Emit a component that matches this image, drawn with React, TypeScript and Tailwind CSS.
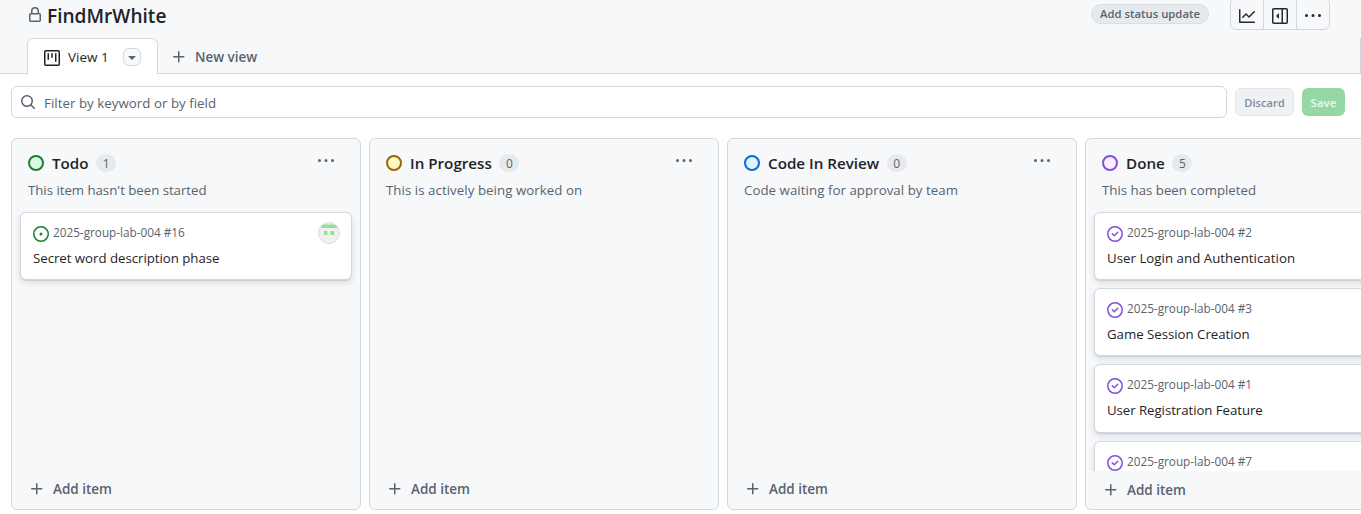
import type { ReactNode } from "react";

const icons = {
  lock: "M4 4a4 4 0 0 1 8 0v2h.25c.966 0 1.75.784 1.75 1.75v5.5A1.75 1.75 0 0 1 12.25 15h-8.5A1.75 1.75 0 0 1 2 13.25v-5.5C2 6.784 2.784 6 3.75 6H4Zm8.25 3.5h-8.5a.25.25 0 0 0-.25.25v5.5c0 .138.112.25.25.25h8.5a.25.25 0 0 0 .25-.25v-5.5a.25.25 0 0 0-.25-.25ZM10.5 6V4a2.5 2.5 0 1 0-5 0v2Z",
  project:
    "M1.75 0h12.5C15.216 0 16 .784 16 1.75v12.5A1.75 1.75 0 0 1 14.25 16H1.75A1.75 1.75 0 0 1 0 14.25V1.75C0 .784.784 0 1.75 0ZM1.5 1.75v12.5c0 .138.112.25.25.25h12.5a.25.25 0 0 0 .25-.25V1.75a.25.25 0 0 0-.25-.25H1.75a.25.25 0 0 0-.25.25ZM11.75 3a.75.75 0 0 1 .75.75v7.5a.75.75 0 0 1-1.5 0v-7.5a.75.75 0 0 1 .75-.75Zm-8.25.75a.75.75 0 0 1 1.5 0v5.5a.75.75 0 0 1-1.5 0ZM8 3a.75.75 0 0 1 .75.75v3.5a.75.75 0 0 1-1.5 0v-3.5A.75.75 0 0 1 8 3Z",
  plus: "M7.75 2a.75.75 0 0 1 .75.75V7h4.25a.75.75 0 0 1 0 1.5H8.5v4.25a.75.75 0 0 1-1.5 0V8.5H2.75a.75.75 0 0 1 0-1.5H7V2.75A.75.75 0 0 1 7.75 2Z",
  search:
    "M10.68 11.74a6 6 0 0 1-7.922-8.982 6 6 0 0 1 8.982 7.922l3.04 3.04a.749.749 0 0 1-.326 1.275.749.749 0 0 1-.734-.215ZM11.5 7a4.499 4.499 0 1 0-8.997 0A4.499 4.499 0 0 0 11.5 7Z",
  triangle: "m4.427 7.427 3.396 3.396a.25.25 0 0 0 .354 0l3.396-3.396A.25.25 0 0 0 11.396 7H4.604a.25.25 0 0 0-.177.427Z",
  graph:
    "M1.5 1.75V13.5h13.75a.75.75 0 0 1 0 1.5H.75a.75.75 0 0 1-.75-.75V1.75a.75.75 0 0 1 1.5 0Zm14.28 2.53-5.25 5.25a.75.75 0 0 1-1.06 0L7 7.06 4.28 9.78a.751.751 0 0 1-1.042-.018.751.751 0 0 1-.018-1.042l3.25-3.25a.75.75 0 0 1 1.06 0L10 7.94l4.72-4.72a.751.751 0 0 1 1.042.018.751.751 0 0 1 .018 1.042Z",
  sidebar:
    "m4.177 7.823 2.396-2.396A.25.25 0 0 1 7 5.604v4.792a.25.25 0 0 1-.427.177L4.177 8.177a.25.25 0 0 1 0-.354ZM0 1.75C0 .784.784 0 1.75 0h12.5C15.216 0 16 .784 16 1.75v12.5A1.75 1.75 0 0 1 14.25 16H1.75A1.75 1.75 0 0 1 0 14.25Zm1.75-.25a.25.25 0 0 0-.25.25v12.5c0 .138.112.25.25.25H9.5v-13Zm12.5 13a.25.25 0 0 0 .25-.25V1.75a.25.25 0 0 0-.25-.25H11v13Z",
  kebab: "M8 9a1.5 1.5 0 1 0 0-3 1.5 1.5 0 0 0 0 3ZM1.5 9a1.5 1.5 0 1 0 0-3 1.5 1.5 0 0 0 0 3Zm13 0a1.5 1.5 0 1 0 0-3 1.5 1.5 0 0 0 0 3Z",
  opened: "M8 9.5a1.5 1.5 0 1 0 0-3 1.5 1.5 0 0 0 0 3ZM8 0a8 8 0 1 1 0 16A8 8 0 0 1 8 0ZM1.5 8a6.5 6.5 0 1 0 13 0 6.5 6.5 0 0 0-13 0Z",
  closed:
    "M11.28 6.78a.75.75 0 0 0-1.06-1.06L7.25 8.69 5.78 7.22a.75.75 0 0 0-1.06 1.06l2 2a.75.75 0 0 0 1.06 0l3.5-3.5ZM16 8A8 8 0 1 1 0 8a8 8 0 0 1 16 0Zm-1.5 0a6.5 6.5 0 1 0-13 0 6.5 6.5 0 0 0 13 0Z",
};

function Icon({ name, className = "" }: { name: keyof typeof icons; className?: string }) {
  return (
    <svg viewBox="0 0 16 16" className={`size-4 shrink-0 fill-current ${className}`} aria-hidden="true">
      <path d={icons[name]} />
    </svg>
  );
}

function Avatar() {
  return (
    <svg viewBox="0 0 22 22" className="-mt-1 -mr-px size-[22px] shrink-0" aria-hidden="true">
      <clipPath id="avatar">
        <circle cx="11" cy="11" r="10.5" />
      </clipPath>
      <circle cx="11" cy="11" r="10.5" fill="#f0f0f0" />
      <g clipPath="url(#avatar)" fill="#8ee48e">
        <path d="M3 2.5h16V6H3zM6 9h3.5v4H6zM12.5 9H16v4h-3.5z" />
      </g>
      <circle cx="11" cy="11" r="10.5" fill="none" stroke="#d9dcdf" />
    </svg>
  );
}

type Item = { number: number; title?: string; open?: boolean; tracking?: string };

function Card({ item }: { item: Item }) {
  return (
    <div className="h-[68.15px] shrink-0 rounded-md border border-[#d1d9e0] bg-white px-3 pt-[13px] shadow-[0_1px_1px_rgba(31,35,40,0.1),0_3px_6px_rgba(31,35,40,0.12)]">
      <div className="flex h-4 items-start">
        <Icon name={item.open ? "opened" : "closed"} className={item.open ? "text-[#1a7f37]" : "text-[#8250df]"} />
        <span className="-mt-0.5 ml-1 flex-1 text-[11.75px] leading-4 text-[#59636e]">2025-group-lab-004 #{item.number}</span>
        {item.open && <Avatar />}
      </div>
      {item.title && (
        <div className={`mt-1.5 text-[13.25px] leading-5 text-[#1f2328] ${item.tracking ?? ""}`}>{item.title}</div>
      )}
    </div>
  );
}

type ColumnData = {
  name: string;
  count: number;
  description: string;
  circle: string;
  tracking?: string;
  footer?: string;
  items: Item[];
};

const columns: ColumnData[] = [
  {
    name: "Todo",
    count: 1,
    description: "This item hasn't been started",
    circle: "border-[#1a7f37] bg-[#dafbe1]",
    tracking: "tracking-[-0.03px]",
    items: [{ number: 16, title: "Secret word description phase", open: true, tracking: "tracking-[-0.03px]" }],
  },
  {
    name: "In Progress",
    count: 0,
    description: "This is actively being worked on",
    circle: "border-[#9a6700] bg-[#fff8c5]",
    tracking: "tracking-[0.06px]",
    items: [],
  },
  {
    name: "Code In Review",
    count: 0,
    description: "Code waiting for approval by team",
    circle: "border-[#0969da] bg-[#ddf4ff]",
    tracking: "tracking-[0.06px]",
    items: [],
  },
  {
    name: "Done",
    count: 5,
    description: "This has been completed",
    circle: "border-[#8250df] bg-[#fbefff]",
    footer: "pt-0.5",
    items: [
      { number: 2, title: "User Login and Authentication", tracking: "tracking-[0.03px]" },
      { number: 3, title: "Game Session Creation", tracking: "tracking-[-0.02px]" },
      { number: 1, title: "User Registration Feature", tracking: "tracking-[-0.06px]" },
      { number: 7 },
    ],
  },
];

function Column({ column }: { column: ColumnData }) {
  return (
    <section className="flex h-[372px] w-[350px] shrink-0 flex-col rounded-md border border-[#d1d9e0] bg-[#f6f8fa]">
      <header className="px-4 pt-[13px]">
        <div className="flex h-[22px] items-center">
          <span className={`size-4 rounded-full border-2 ${column.circle}`} />
          <h2 className="ml-2 text-[15.2px] leading-6 font-semibold text-[#1f2328]">{column.name}</h2>
          <span className="ml-[7.5px] flex h-[18px] min-w-5 items-center justify-center rounded-full bg-[#e7eaed] px-[6.5px] pt-px text-[12px] font-medium text-[#59636e]">
            {column.count}
          </span>
          <Icon name="kebab" className="mr-2.5 mb-1 ml-auto text-[#59636e]" />
        </div>
        <p className={`mt-1.5 text-[13.25px] leading-5 text-[#59636e] ${column.tracking ?? ""}`}>{column.description}</p>
      </header>
      <div className="mt-[11px] flex min-h-0 flex-1 flex-col gap-2 overflow-hidden px-2 pt-[1.1px]">
        {column.items.map((item) => (
          <Card key={item.number} item={item} />
        ))}
      </div>
      <footer className={`flex h-[38px] items-center gap-2 pb-0.5 pl-[17px] text-[13.5px] font-semibold text-[#59636e] ${column.footer ?? ""}`}>
        <Icon name="plus" />
        <span className="pt-px">Add item</span>
      </footer>
    </section>
  );
}

function ToolButton({ children }: { children: ReactNode }) {
  return <button className="flex min-w-0 flex-1 items-center justify-center pt-[3px]">{children}</button>;
}

export default function App() {
  return (
    <div className="h-[514px] w-[1361px] overflow-hidden bg-white font-['Open_Sans','Noto_Sans',sans-serif] text-[#1f2328]">
      <div className="flex h-[74px] flex-col justify-between border-b border-[#d1d9e0] bg-[#f6f8fa]">
        <div className="flex h-[30px] items-start pr-[31px] pl-[27px]">
          <Icon name="lock" className="mt-[7px] text-[#59636e]" />
          <h1 className="mt-px ml-1 text-[19.1px] leading-[30px] font-semibold">FindMrWhite</h1>
          <button className="mt-1 ml-auto flex h-5 w-[118px] items-center justify-center rounded-full border border-[#d9dee3] bg-[#e7eaed] pt-px text-[11.3px] font-semibold text-[#59636e]">
            Add status update
          </button>
          <div className="-mt-0.5 ml-[21px] flex h-8 w-[100px] divide-x divide-[#d1d9e0] rounded-md border border-[#d1d9e0] text-[#25292e]">
            <ToolButton>
              <Icon name="graph" />
            </ToolButton>
            <ToolButton>
              <Icon name="sidebar" />
            </ToolButton>
            <ToolButton>
              <Icon name="kebab" />
            </ToolButton>
          </div>
        </div>
        <nav className="-mb-px flex h-9 items-stretch pl-[27px]">
          <div className="flex w-[131px] items-center rounded-t-md border border-b-0 border-[#d1d9e0] bg-white pl-4">
            <Icon name="project" className="mt-[3px]" />
            <span className="mt-0.5 ml-2 text-[13.5px]">View 1</span>
            <button className="mr-4 ml-auto flex size-[18px] items-center justify-center rounded-md border border-[#d1d9e0] bg-[#f6f8fa] text-[#59636e]">
              <Icon name="triangle" />
            </button>
          </div>
          <div className="ml-[13px] flex items-center gap-2 pt-0.5 text-[13.4px] font-semibold text-[#59636e]">
            <Icon name="plus" />
            New view
          </div>
          <div className="mb-px ml-auto w-px bg-[#d1d9e0]" />
        </nav>
      </div>

      <div className="flex items-center gap-2 pt-3 pr-4 pl-[11px]">
        <div className="flex h-8 flex-1 items-center gap-2 rounded-md border border-[#d1d9e0] pl-2 text-[#59636e]">
          <Icon name="search" />
          <span className="pt-[3px] text-[13.3px] tracking-[0.03px]">Filter by keyword or by field</span>
        </div>
        <button className="flex h-7 w-[59px] items-center justify-center rounded-md border border-[#e2e6ea] bg-[#eff2f5] pt-0.5 text-[11.2px] font-semibold text-[#818b98]">
          Discard
        </button>
        <button className="flex h-7 w-[43px] items-center justify-center rounded-md bg-[#95d8a6] pt-0.5 text-[11.5px] font-semibold text-[#e9f7ed]">
          Save
        </button>
      </div>

      <main className="mt-5 flex gap-2 pl-[11px]">
        {columns.map((column) => (
          <Column key={column.name} column={column} />
        ))}
      </main>
    </div>
  );
}
